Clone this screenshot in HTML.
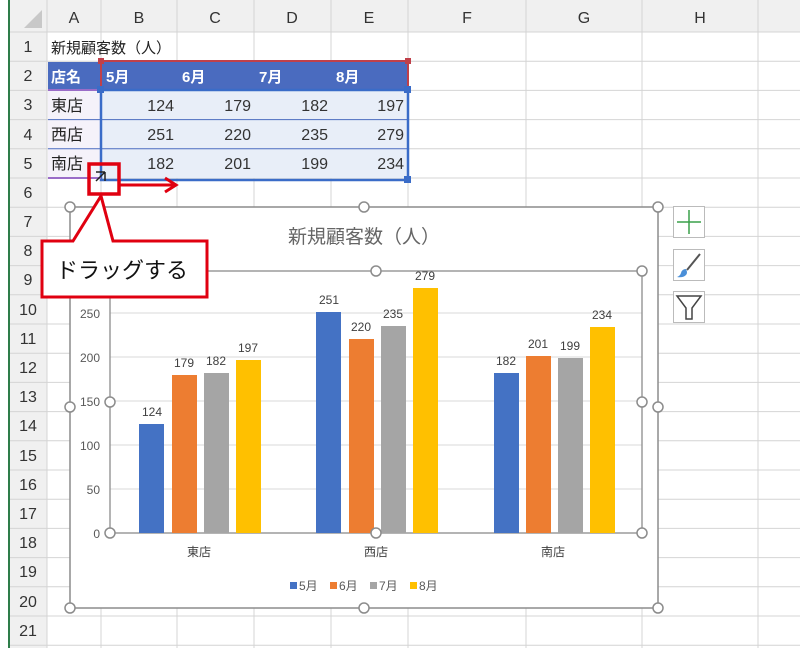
<!DOCTYPE html><html><head><meta charset="utf-8"><style>
body{margin:0;width:800px;height:648px;overflow:hidden;background:#fff;font-family:"Liberation Sans","Noto Sans CJK JP",sans-serif}
svg{position:absolute;left:0;top:0}
</style></head><body>
<svg width="800" height="648" viewBox="0 0 800 648" font-family="Liberation Sans, Noto Sans CJK JP, sans-serif">
<rect x="0" y="0" width="800" height="648" fill="#fff"/>
<!-- headers -->
<rect x="10" y="0" width="790" height="32" fill="#f0f0f0"/>
<rect x="10" y="0" width="37" height="648" fill="#f0f0f0"/>
<line x1="9" y1="0" x2="9" y2="648" stroke="#2e7d4a" stroke-width="2"/>
<polygon points="42,28 42,10 24,28" fill="#c8c8c8"/>
<g stroke="#d4d4d4" stroke-width="1">
<line x1="47" y1="0" x2="47" y2="648"/><line x1="101" y1="0" x2="101" y2="648"/><line x1="177" y1="0" x2="177" y2="648"/><line x1="254" y1="0" x2="254" y2="648"/><line x1="331" y1="0" x2="331" y2="648"/><line x1="408" y1="0" x2="408" y2="648"/><line x1="526" y1="0" x2="526" y2="648"/><line x1="642" y1="0" x2="642" y2="648"/><line x1="758" y1="0" x2="758" y2="648"/>
<line x1="10" y1="32" x2="800" y2="32"/>
<line x1="10" y1="61.2" x2="800" y2="61.2"/><line x1="10" y1="90.4" x2="800" y2="90.4"/><line x1="10" y1="119.6" x2="800" y2="119.6"/><line x1="10" y1="148.8" x2="800" y2="148.8"/><line x1="10" y1="178" x2="800" y2="178"/><line x1="10" y1="207.2" x2="800" y2="207.2"/><line x1="10" y1="236.4" x2="800" y2="236.4"/><line x1="10" y1="265.6" x2="800" y2="265.6"/><line x1="10" y1="294.8" x2="800" y2="294.8"/><line x1="10" y1="324" x2="800" y2="324"/><line x1="10" y1="353.2" x2="800" y2="353.2"/><line x1="10" y1="382.4" x2="800" y2="382.4"/><line x1="10" y1="411.6" x2="800" y2="411.6"/><line x1="10" y1="440.8" x2="800" y2="440.8"/><line x1="10" y1="470" x2="800" y2="470"/><line x1="10" y1="499.2" x2="800" y2="499.2"/><line x1="10" y1="528.4" x2="800" y2="528.4"/><line x1="10" y1="557.6" x2="800" y2="557.6"/><line x1="10" y1="586.8" x2="800" y2="586.8"/><line x1="10" y1="616" x2="800" y2="616"/><line x1="10" y1="645.2" x2="800" y2="645.2"/>
</g>
<g font-size="16" fill="#333" text-anchor="middle">
<text x="74" y="23">A</text><text x="139" y="23">B</text><text x="215" y="23">C</text><text x="292" y="23">D</text><text x="369" y="23">E</text><text x="467" y="23">F</text><text x="584" y="23">G</text><text x="700" y="23">H</text>
<g font-size="16"><text x="28" y="52">1</text><text x="28" y="81">2</text><text x="28" y="110">3</text><text x="28" y="140">4</text><text x="28" y="169">5</text><text x="28" y="198">6</text><text x="28" y="227">7</text><text x="28" y="256">8</text><text x="28" y="285">9</text><text x="28" y="315">10</text><text x="28" y="344">11</text><text x="28" y="373">12</text><text x="28" y="402">13</text><text x="28" y="431">14</text><text x="28" y="461">15</text><text x="28" y="490">16</text><text x="28" y="519">17</text><text x="28" y="548">18</text><text x="28" y="577">19</text><text x="28" y="607">20</text><text x="28" y="636">21</text></g>
</g>
<!-- table -->
<rect x="48" y="62" width="360" height="28" fill="#4a6bbf"/>
<rect x="102" y="91" width="306" height="87" fill="#e8eef8"/>
<rect x="48" y="91" width="53" height="87" fill="#f5f2fa"/>
<line x1="48" y1="119.6" x2="408" y2="119.6" stroke="#4a6bbf"/><line x1="48" y1="148.8" x2="408" y2="148.8" stroke="#4a6bbf"/>
<text x="51" y="53" font-size="15" fill="#222">新規顧客数（人）</text>
<g font-size="15" font-weight="bold" fill="#fff"><text x="51" y="82">店名</text><text x="106" y="82">5月</text><text x="182" y="82">6月</text><text x="259" y="82">7月</text><text x="336" y="82">8月</text></g>
<g font-size="16" fill="#222"><text x="51" y="111">東店</text><text x="51" y="140">西店</text><text x="51" y="169">南店</text></g>
<g font-size="16" fill="#333" text-anchor="end">
<text x="174" y="111">124</text><text x="251" y="111">179</text><text x="328" y="111">182</text><text x="404" y="111">197</text>
<text x="174" y="140">251</text><text x="251" y="140">220</text><text x="328" y="140">235</text><text x="404" y="140">279</text>
<text x="174" y="169">182</text><text x="251" y="169">201</text><text x="328" y="169">199</text><text x="404" y="169">234</text></g>
<rect x="101" y="61" width="307" height="29" fill="none" stroke="#c0404a" stroke-width="2"/>
<rect x="101" y="90" width="307" height="90" fill="none" stroke="#3a6cc8" stroke-width="2.5"/>
<line x1="48" y1="90" x2="101" y2="90" stroke="#9a6cc8" stroke-width="2"/><line x1="48" y1="178" x2="101" y2="178" stroke="#9a6cc8" stroke-width="2"/>
<g fill="#3a6cc8"><rect x="97" y="86" width="7" height="7"/><rect x="404" y="86" width="7" height="7"/><rect x="404" y="176" width="7" height="7"/></g>
<g fill="#c0404a"><rect x="98" y="58" width="6" height="6"/><rect x="405" y="58" width="6" height="6"/></g>
<!-- chart -->
<rect x="70" y="207" width="588" height="401" fill="#fff" stroke="#8c8c8c" stroke-width="1.5"/>
<text x="364" y="243" font-size="19" fill="#666" text-anchor="middle">新規顧客数（人）</text>
<g stroke="#d9d9d9"><line x1="110" y1="313" x2="642" y2="313"/><line x1="110" y1="357" x2="642" y2="357"/><line x1="110" y1="401" x2="642" y2="401"/><line x1="110" y1="445" x2="642" y2="445"/><line x1="110" y1="489" x2="642" y2="489"/></g>
<rect x="110" y="271" width="532" height="262" fill="none" stroke="#8c8c8c" stroke-width="1.3"/>
<g font-size="12" fill="#595959" text-anchor="end"><text x="100" y="318">250</text><text x="100" y="362">200</text><text x="100" y="406">150</text><text x="100" y="450">100</text><text x="100" y="494">50</text><text x="100" y="538">0</text></g>
<g>
<rect x="139" y="424" width="25" height="109" fill="#4472c4"/><rect x="172" y="375" width="25" height="158" fill="#ed7d31"/><rect x="204" y="373" width="25" height="160" fill="#a5a5a5"/><rect x="236" y="360" width="25" height="173" fill="#ffc000"/>
<rect x="316" y="312" width="25" height="221" fill="#4472c4"/><rect x="349" y="339" width="25" height="194" fill="#ed7d31"/><rect x="381" y="326" width="25" height="207" fill="#a5a5a5"/><rect x="413" y="288" width="25" height="245" fill="#ffc000"/>
<rect x="494" y="373" width="25" height="160" fill="#4472c4"/><rect x="526" y="356" width="25" height="177" fill="#ed7d31"/><rect x="558" y="358" width="25" height="175" fill="#a5a5a5"/><rect x="590" y="327" width="25" height="206" fill="#ffc000"/>
</g>
<g font-size="12" fill="#404040" text-anchor="middle">
<text x="152" y="416">124</text><text x="184" y="367">179</text><text x="216" y="365">182</text><text x="248" y="352">197</text>
<text x="329" y="304">251</text><text x="361" y="331">220</text><text x="393" y="318">235</text><text x="425" y="280">279</text>
<text x="506" y="365">182</text><text x="538" y="348">201</text><text x="570" y="350">199</text><text x="602" y="319">234</text>
<text x="199" y="556">東店</text><text x="376" y="556">西店</text><text x="553" y="556">南店</text></g>
<g font-size="12" fill="#595959">
<rect x="290" y="582" width="7" height="7" fill="#4472c4"/><text x="299" y="590">5月</text>
<rect x="330" y="582" width="7" height="7" fill="#ed7d31"/><text x="339" y="590">6月</text>
<rect x="370" y="582" width="7" height="7" fill="#a5a5a5"/><text x="379" y="590">7月</text>
<rect x="410" y="582" width="7" height="7" fill="#ffc000"/><text x="419" y="590">8月</text></g>
<g fill="#fff" stroke="#8c8c8c" stroke-width="1.5">
<circle cx="70" cy="207" r="5"/><circle cx="364" cy="207" r="5"/><circle cx="658" cy="207" r="5"/><circle cx="70" cy="407" r="5"/><circle cx="658" cy="407" r="5"/><circle cx="70" cy="608" r="5"/><circle cx="364" cy="608" r="5"/><circle cx="658" cy="608" r="5"/>
<circle cx="110" cy="271" r="5"/><circle cx="376" cy="271" r="5"/><circle cx="642" cy="271" r="5"/><circle cx="110" cy="402" r="5"/><circle cx="642" cy="402" r="5"/><circle cx="110" cy="533" r="5"/><circle cx="376" cy="533" r="5"/><circle cx="642" cy="533" r="5"/></g>
<!-- buttons -->
<g fill="#fff" stroke="#bbb"><rect x="673.5" y="206.5" width="31" height="31"/><rect x="673.5" y="249.5" width="31" height="31"/><rect x="673.5" y="291.5" width="31" height="31"/></g>
<path d="M689 210v24M677 222h24" stroke="#3aa04a" stroke-width="1.5"/>
<path d="M700 254 L687 270" stroke="#555" stroke-width="2"/>
<path d="M686 269 q-4 0 -5 4 q-1 3 -4 4 q6 1 9 -2 q2 -2 0 -6z" fill="#4a8fd8"/>
<path d="M677 296h24l-9 12v11h-6v-11z" fill="none" stroke="#444" stroke-width="1.5"/>
<!-- callout -->
<rect x="89" y="164" width="30" height="30" fill="none" stroke="#e00010" stroke-width="3.5"/>
<path d="M96 172 l9 0 M105 172 l0 9 M96 181 l9 -9" stroke="#222" stroke-width="1.5" fill="none"/>
<path d="M119 185 H175 M165 178 L176 185 L165 192" stroke="#e00010" stroke-width="3" fill="none"/>
<path d="M42 241 H73 L101 196 L113 241 H207 V297 H42 Z" fill="#fff" stroke="#e00010" stroke-width="3" stroke-linejoin="miter"/>
<text x="56" y="278" font-size="22" fill="#111">ドラッグする</text>
</svg>
</body></html>
